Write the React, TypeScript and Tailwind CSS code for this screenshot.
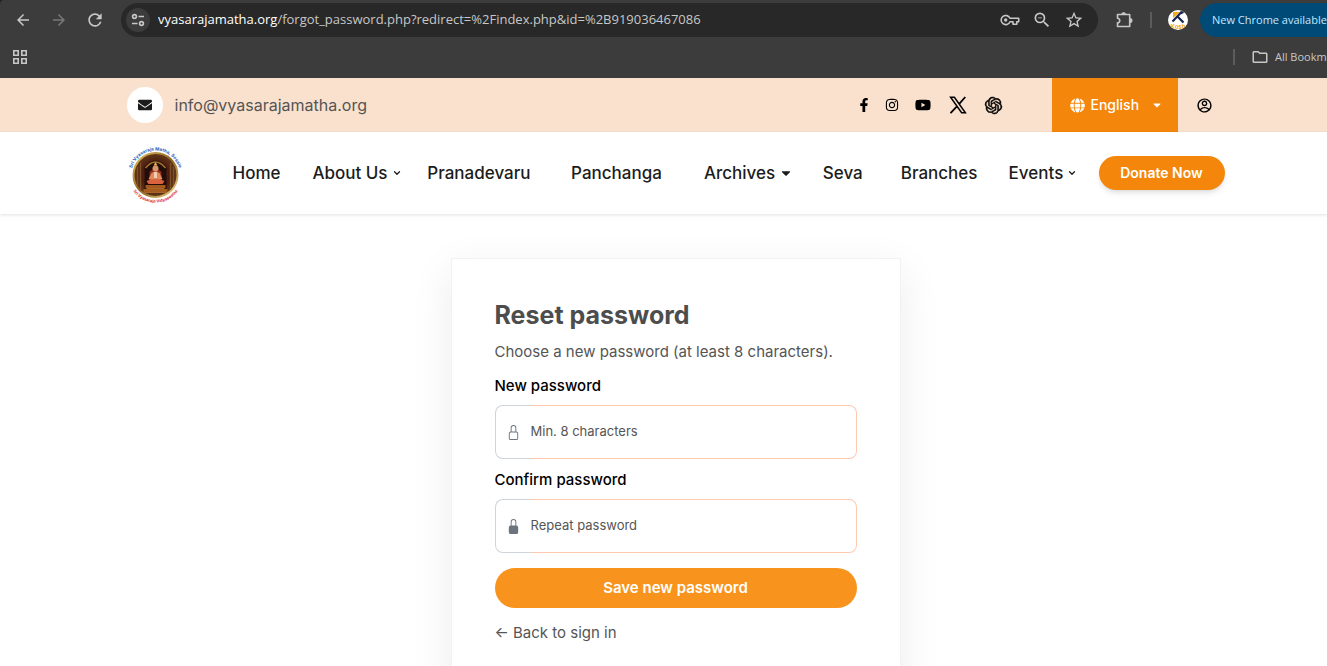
import { useState } from 'react'
import type { ReactNode } from 'react'
import { BsLock, BsLockFill } from 'react-icons/bs'
import { FaCaretDown, FaEnvelope, FaFacebookF, FaGlobe, FaInstagram, FaYoutube } from 'react-icons/fa'
import {
  MdArrowBack,
  MdArrowForward,
  MdOutlineFolder,
  MdOutlineZoomOut,
  MdRefresh,
  MdStarBorder,
} from 'react-icons/md'
import { RiAccountCircleLine } from 'react-icons/ri'
import { SiOpenai } from 'react-icons/si'
import { ChevronDown } from 'lucide-react'

type NavItem = {
  label: string
  icon?: 'chevron' | 'caret'
}

const NAV: NavItem[] = [
  { label: 'Home' },
  { label: 'About Us', icon: 'chevron' },
  { label: 'Pranadevaru' },
  { label: 'Panchanga' },
  { label: 'Archives', icon: 'caret' },
  { label: 'Seva' },
  { label: 'Branches' },
  { label: 'Events', icon: 'chevron' },
]

function SiteSettingsIcon() {
  return (
    <svg viewBox="0 0 16 16" className="h-4 w-4" fill="none" stroke="currentColor" strokeWidth="1.6">
      <circle cx="4.5" cy="4.5" r="1.9" />
      <path d="M8.5 4.5H14M2 11.5h5.5" />
      <circle cx="11.5" cy="11.5" r="1.9" />
    </svg>
  )
}

function AppsIcon() {
  return (
    <svg viewBox="0 0 14 14" className="h-3.5 w-3.5" fill="none" stroke="currentColor" strokeWidth="1.6">
      <path d="M.8.8h4.4v4.4H.8zM8.8.8h4.4v4.4H8.8zM.8 8.8h4.4v4.4H.8zM8.8 8.8h4.4v4.4H8.8z" />
    </svg>
  )
}

function KeyIcon() {
  return (
    <svg viewBox="0 0 20 20" className="h-5 w-5" fill="none" stroke="currentColor" strokeWidth="1.6">
      <path d="M10 8.3A4.6 4.6 0 1 0 10 11.8h3v2.4h3.8v-2.4h1.9V8.3z" strokeLinejoin="round" />
      <circle cx="5.7" cy="10" r="1.7" fill="currentColor" stroke="none" />
    </svg>
  )
}

function ExtensionIcon() {
  return (
    <svg viewBox="0 0 20 20" className="h-5 w-5" fill="none" stroke="currentColor" strokeWidth="1.6">
      <path d="M3.5 4.5h12.2v12H3.5v-3.7c3 0 3-4.6 0-4.6z" strokeLinejoin="round" />
      <path d="M7.7 4.5a1.9 2 0 0 1 3.8 0zM15.7 8.6a2 1.9 0 0 1 0 3.8z" fill="currentColor" stroke="none" />
      <path d="M8 4.3a1.700 1.700 0 0 1 3.3 0M16 8.700a1.700 1.700 0 0 1 0 3.4" />
    </svg>
  )
}

function XIcon() {
  return (
    <svg viewBox="0 0 18 18" className="h-[18px] w-[18px]" fill="none" stroke="currentColor" strokeWidth="1.5">
      <path d="M1.6 1.2h3.8l11 15.6h-3.8z" />
      <path d="M16.3 1 10 8.2M7.7 10.6 1.5 17.2" strokeWidth="1.8" />
    </svg>
  )
}

function ProfileIcon() {
  return (
    <svg viewBox="0 0 20 20" className="h-5 w-5">
      <defs>
        <clipPath id="profile">
          <circle cx="10" cy="10" r="10" />
        </clipPath>
      </defs>
      <g clipPath="url(#profile)">
        <rect width="20" height="20" fill="#fff" />
        <path d="M5 2h7L5 8z" fill="#f7a81b" />
        <path d="M14 1.5 4.5 11.5M9.5 6.5l6 6M12 3.5 15.5 2" stroke="#17264d" strokeWidth="2.2" fill="none" />
        <text x="10" y="18.6" textAnchor="middle" fontSize="6" fontWeight="700" fill="#f0a52a" fontFamily="Inter, sans-serif">
          Kosh
        </text>
      </g>
    </svg>
  )
}

function Logo() {
  return (
    <svg viewBox="0 0 54 62" className="h-[62px] w-[54px] overflow-visible" aria-label="Sri Vyasaraja Matha">
      <defs>
        <path id="ringTop" d="M4 33A24.5 24.5 0 0 1 53 33" />
        <path id="ringBottom" d="M1 33A27.500 27.500 0 0 0 56 33" />
        <radialGradient id="hall" cx="50%" cy="50%" r="55%">
          <stop offset="0" stopColor="#8c3a1d" />
          <stop offset="0.55" stopColor="#4a1c10" />
          <stop offset="1" stopColor="#6b4518" />
        </radialGradient>
        <linearGradient id="rim" x1="0" y1="0" x2="1" y2="1">
          <stop offset="0" stopColor="#e9c46c" />
          <stop offset="0.5" stopColor="#8d6420" />
          <stop offset="1" stopColor="#f3d88b" />
        </linearGradient>
      </defs>
      <circle cx="28.5" cy="33" r="22" fill="url(#hall)" stroke="url(#rim)" strokeWidth="2" />
      <g transform="translate(0.5 1)">
        <path d="M17 47V24q11-13 22 0v23z" fill="#230d0b" />
        <path d="M13 20v27M10 24v18M43 20v27M46 24v18" stroke="#80502a" strokeWidth="1.4" />
        <path d="M18 25q10-12 20 0" stroke="#a4742c" strokeWidth="1.5" fill="none" />
        <path d="M22 40V29q6-7 12 0v11z" fill="#932c20" />
        <circle cx="28" cy="25.5" r="3" fill="#d99667" />
        <path d="M26 22.5 28 19l2 3.5z" fill="#e5b84d" />
        <path d="M24 30q4-3 8 0l3 6-3 1H24l-3-1z" fill="#e0895f" />
        <path d="M26.5 29h3v6h-3z" fill="#f2cfb0" />
        <path d="M19 38q9-4 18 0l-2 3H21z" fill="#d9633f" />
        <path d="M18 42h20v3H18zM16 46h24v3H16z" fill="#a65b1e" />
        <path d="M19 45.5h18M17 49.5h22" stroke="#a8662a" />
      </g>
      <text fontSize="4.6" fontWeight="700" fill="#1f5fc0" fontFamily="Inter, sans-serif">
        <textPath href="#ringTop" startOffset="50%" textAnchor="middle">Sri Vyasaraja Matha, Sosale</textPath>
      </text>
      <text fontSize="4" fontWeight="700" fill="#e0242c" fontFamily="Inter, sans-serif">
        <textPath href="#ringBottom" startOffset="50%" textAnchor="middle">Sri Vyasaraja Vidyapeetha</textPath>
      </text>
    </svg>
  )
}

function BrowserBar() {
  return (
    <div className="shrink-0 bg-[#1f1f1f] font-['Open_Sans',sans-serif] text-[#c7c7c7]">
      <div className="rounded-tl-sm bg-[#3c3c3c]">
        <div className="flex h-10 items-center pl-[13px]">
          <div className="mr-4 flex gap-4">
            <button type="button" aria-label="Back"><MdArrowBack className="h-5 w-5 p-px" /></button>
            <button type="button" aria-label="Forward" className="text-[#787878]"><MdArrowForward className="h-5 w-5 p-px" /></button>
            <button type="button" aria-label="Reload"><MdRefresh className="h-5 w-5" /></button>
          </div>
          <div className="flex h-[34px] min-w-0 flex-1 items-center rounded-full bg-[#282828] pr-3.5 pl-[5px]">
            <button type="button" aria-label="Site information" className="mr-2 flex h-6 w-6 items-center justify-center rounded-full bg-[#3c3c3c]">
              <SiteSettingsIcon />
            </button>
            <p className="flex-1 truncate text-[13px]">
              <span className="text-white">vyasarajamatha.org</span>
              /forgot_password.php?redirect=%2Findex.php&amp;id=%2B919036467086
            </p>
            <div className="flex gap-3">
              <button type="button" aria-label="Passwords"><KeyIcon /></button>
              <button type="button" aria-label="Zoom"><MdOutlineZoomOut className="h-5 w-5" /></button>
              <button type="button" aria-label="Bookmark"><MdStarBorder className="h-5 w-5" /></button>
            </div>
          </div>
          <button type="button" aria-label="Extensions" className="ml-4"><ExtensionIcon /></button>
          <div className="mx-4 h-4 w-0.5 bg-[#5c5c5c]" />
          <button type="button" aria-label="Profile"><ProfileIcon /></button>
          <button type="button" className="ml-3 h-[34px] w-[127px] overflow-hidden rounded-l-full bg-[#004a77] pl-3 text-left text-[11px] whitespace-nowrap text-[#c2e7ff]">
            New Chrome available
          </button>
        </div>
        <div className="flex h-[38px] items-center pb-1 pl-[13px]">
          <button type="button" aria-label="Apps"><AppsIcon /></button>
          <div className="ml-auto h-4 w-0.5 bg-[#5c5c5c]" />
          <button type="button" className="ml-4 flex w-[76px] items-center gap-1.5 overflow-hidden text-[11px] whitespace-nowrap">
            <MdOutlineFolder className="h-[18px] w-[18px] shrink-0" />
            All Bookmarks
          </button>
        </div>
      </div>
    </div>
  )
}

function TopBar() {
  return (
    <div className="bg-[#fae1cd] pl-6">
      <div className="mx-auto flex h-[54px] max-w-[1098px] items-center">
        <span className="mr-3 flex h-9 w-9 items-center justify-center rounded-full bg-white">
          <FaEnvelope className="h-3.5 w-3.5 text-[#1c1c1c]" />
        </span>
        <a href="mailto:info@vyasarajamatha.org" className="text-base text-[#555]">info@vyasarajamatha.org</a>
        <div className="ml-auto flex items-center text-black">
          <a href="#facebook" aria-label="Facebook"><FaFacebookF className="h-3.5 w-3.5" /></a>
          <a href="#instagram" aria-label="Instagram" className="ml-3.5"><FaInstagram className="h-3.5 w-3.5" /></a>
          <a href="#youtube" aria-label="YouTube" className="ml-4"><FaYoutube className="h-4 w-4" /></a>
          <a href="#x" aria-label="X" className="ml-[18px]"><XIcon /></a>
          <a href="#openai" aria-label="OpenAI" className="ml-[18px]"><SiOpenai className="h-[17px] w-[17px] overflow-visible" stroke="currentColor" strokeWidth="0.7" /></a>
        </div>
        <button type="button" className="ml-[50px] flex h-full w-[126px] items-center bg-[#f4860b] pl-[18px] text-sm font-medium text-white">
          <FaGlobe className="mr-1.5 h-[15px] w-[15px]" />
          English
          <FaCaretDown className="ml-3 h-3 w-3" />
        </button>
        <button type="button" aria-label="Account" className="mr-3 ml-[18px]"><RiAccountCircleLine className="h-[17px] w-[17px] text-black" /></button>
      </div>
    </div>
  )
}

function NavBar() {
  return (
    <header className="relative bg-white pl-6 shadow-[0_1px_3px_rgba(0,0,0,0.12)]">
      <div className="mx-auto flex h-[82px] max-w-[1098px] items-center">
        <a href="#home" className="mr-[52px]"><Logo /></a>
        <nav className="grid flex-1 grid-cols-[80fr_115fr_144fr_133fr_119fr_78fr_108fr_90fr]">
          {NAV.map((item) => (
            <a key={item.label} href={`#${item.label}`} className="flex items-center gap-1 text-[17px] leading-6 font-medium whitespace-nowrap text-[#1c1c1c]">
              {item.label}
              {item.icon === 'chevron' && <ChevronDown className="h-2.5 w-2.5" strokeWidth={3} />}
              {item.icon === 'caret' && <FaCaretDown className="h-3.5 w-3.5" />}
            </a>
          ))}
        </nav>
        <button type="button" className="h-[34px] w-[126px] rounded-full bg-[#f4860b] text-sm font-semibold text-white shadow-md">
          Donate Now
        </button>
      </div>
    </header>
  )
}

type PasswordFieldProps = {
  id: string
  label: string
  placeholder: string
  icon: ReactNode
  value: string
  onChange: (value: string) => void
}

function PasswordField({ id, label, placeholder, icon, value, onChange }: PasswordFieldProps) {
  return (
    <div>
      <label htmlFor={id} className="mb-[9px] block text-[15px] leading-5 font-medium text-black">{label}</label>
      <div className="flex h-[54px]">
        <span className="flex w-9 items-center rounded-l-lg border border-r-0 border-[#ced4da] pl-2.5 text-[#6c757d]">{icon}</span>
        <input
          id={id}
          type="password"
          placeholder={placeholder}
          value={value}
          onChange={(e) => onChange(e.target.value)}
          className="min-w-0 flex-1 rounded-r-lg border border-l-0 border-[#ffc9b0] text-[13px] text-[#555] outline-none placeholder:text-[#555]"
        />
      </div>
    </div>
  )
}

export default function App() {
  const [password, setPassword] = useState('')
  const [confirm, setConfirm] = useState('')

  return (
    <div className="flex h-screen flex-col overflow-hidden bg-white">
      <BrowserBar />
      <div className="min-h-0 flex-1 overflow-hidden font-[Inter,sans-serif]">
        <TopBar />
        <NavBar />
        <main className="pt-11 pl-6">
          <form
            onSubmit={(e) => e.preventDefault()}
            className="mx-auto max-w-[450px] border border-[#f2f2f2] bg-white px-[43px] pt-10 pb-11 shadow-[0_12px_40px_rgba(0,0,0,0.08)]"
          >
            <h1 className="mb-2 text-[25px] leading-8 font-bold text-[#4d4d4d]">Reset password</h1>
            <p className="mb-[11px] text-[15px] leading-[26px] text-[#555]">Choose a new password (at least 8 characters).</p>
            <div className="mb-[15px] space-y-[11px]">
              <PasswordField
                id="new-password"
                label="New password"
                placeholder="Min. 8 characters"
                icon={<BsLock className="h-[15px] w-[15px]" />}
                value={password}
                onChange={setPassword}
              />
              <PasswordField
                id="confirm-password"
                label="Confirm password"
                placeholder="Repeat password"
                icon={<BsLockFill className="h-[15px] w-[15px]" />}
                value={confirm}
                onChange={setConfirm}
              />
            </div>
            <button type="submit" className="mb-3 h-10 w-full rounded-full bg-[#f8941d] text-[15px] font-semibold text-white">
              Save new password
            </button>
            <a href="#signin" className="text-[15px] leading-6 text-[#555]">← Back to sign in</a>
          </form>
        </main>
      </div>
    </div>
  )
}
